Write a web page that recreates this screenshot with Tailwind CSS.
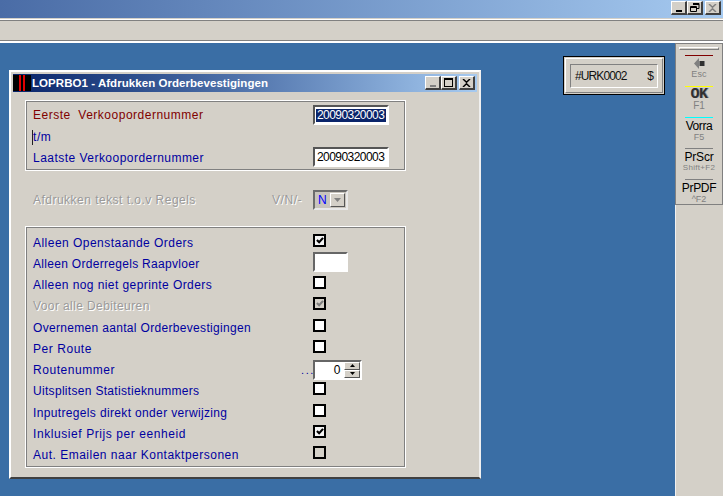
<!DOCTYPE html>
<html>
<head>
<meta charset="utf-8">
<script src="https://cdn.jsdelivr.net/npm/@tailwindcss/browser@4"></script>
</head>
<body class="m-0 overflow-hidden">
<div class="w-[723px] h-[496px] flex flex-col overflow-hidden bg-[#3a6ea5] font-['Liberation_Sans',Arial,sans-serif] text-[12px] leading-[14px] tracking-[0.55px]">
  <!-- app title bar -->
  <div class="h-[18px] shrink-0 flex justify-end items-start pt-[1px] pr-[2px] bg-gradient-to-r from-[#4a6ca6] to-[#a6caf0]">
    <div class="flex">
      <div class="w-[16px] h-[14px] bg-[#d4d0c8] border-t border-l border-white border-r-2 border-b-2 border-r-[#404040] border-b-[#404040] flex items-end justify-center pb-[1px]"><div class="w-[6px] h-[2px] bg-black"></div></div>
      <div class="w-[16px] h-[14px] bg-[#d4d0c8] border-t border-l border-white border-r-2 border-b-2 border-r-[#404040] border-b-[#404040] flex items-center justify-center">
        <svg width="10" height="9" viewBox="0 0 10 9"><path d="M3 0.5h6v5H7M3 1.5h6M0.5 3.5h6v5h-6zM0.5 4.5h6" fill="none" stroke="#000"/></svg>
      </div>
      <div class="ml-[2px] w-[16px] h-[14px] bg-[#d4d0c8] border-t border-l border-white border-r-2 border-b-2 border-r-[#404040] border-b-[#404040] flex items-center justify-center">
        <svg width="9" height="8" viewBox="0 0 9 8"><path d="M1 0l3.500 3.200L8 0M1 8l3.500-3.200L8 8" fill="none" stroke="#808080" stroke-width="1.5"/></svg>
      </div>
    </div>
  </div>
  <!-- menu band -->
  <div class="h-[25px] shrink-0 bg-[#d4d0c8] border-b-2 border-b-white relative">
    <div class="h-[1px] mt-[1px] bg-white"></div>
    <div class="h-[1px] bg-[#808080]"></div>
    <div class="absolute left-0 right-0 bottom-0 h-[1px] bg-[#808080]"></div>
  </div>
  <!-- desktop -->
  <div class="relative flex-1 flex justify-end">
    <!-- toolbar column -->
    <div class="w-[48px] h-full bg-[#d4d0c8] border-l border-[#f0f0f0]">
      <div class="-ml-[1px] h-[162px] border border-[#808080] bg-[#d4d0c8] flex flex-col items-center pt-[3px] tracking-normal">
        <div class="w-[40px] h-[3px] bg-[#d4d0c8] border-t border-l border-white border-r border-b border-r-[#808080] border-b-[#808080] mb-[5px]"></div>
        <div class="h-[31px] w-full flex flex-col items-center">
          <div class="w-[28px] h-[1px] bg-[#800000]"></div>
          <svg class="mt-[2px]" width="11" height="11" viewBox="0 0 11 11"><path d="M0 5.500L5 0v3h6v5H5v3z" fill="#808080"/><path d="M6 3h4v5H6z" fill="#303030"/></svg>
          <div class="text-[9px] leading-[8px] mt-[1px] text-[#808080] tracking-[0.2px]">Esc</div>
        </div>
        <div class="h-[31px] w-full flex flex-col items-center">
          <div class="w-[28px] h-[1px] bg-[#ffff00]"></div>
          <div class="font-['Liberation_Mono',monospace] text-[15px] leading-[13px] mt-[1px] font-bold text-[#303030] tracking-[-0.5px] [text-shadow:1px_0_#999]">OK</div>
          <div class="text-[10px] leading-[8px] mt-[1px] text-[#808080]">F1</div>
        </div>
        <div class="h-[31px] w-full flex flex-col items-center">
          <div class="w-[28px] h-[1px] bg-[#00ffff]"></div>
          <div class="text-[12px] leading-[14px] mt-[1px] text-black tracking-[-0.4px]">Vorra</div>
          <div class="text-[9px] leading-[8px] text-[#808080]">F5</div>
        </div>
        <div class="h-[31px] w-full flex flex-col items-center">
          <div class="w-[28px] h-[1px] bg-[#808080]"></div>
          <div class="text-[12px] leading-[14px] mt-[1px] text-black tracking-[-0.2px]">PrScr</div>
          <div class="text-[8px] leading-[8px] text-[#808080] tracking-[0.3px] whitespace-nowrap">Shift+F2</div>
        </div>
        <div class="h-[24px] w-full flex flex-col items-center">
          <div class="w-[28px] h-[1px] bg-[#808080]"></div>
          <div class="text-[12px] leading-[14px] mt-[1px] text-black tracking-[-0.3px]">PrPDF</div>
          <div class="text-[9px] leading-[8px] text-[#808080]">^F2</div>
        </div>
      </div>
    </div>

    <!-- floating label window -->
    <div class="absolute left-[563px] top-[13px] w-[102px] h-[39px] bg-[#d4d0c8] border border-black p-[1px]">
      <div class="w-full h-full border border-white border-r-[#808080] border-b-[#808080] px-[4px] pt-[5px] pb-[4px]">
        <div class="w-full h-full border border-[#808080] border-r-white border-b-white flex items-center justify-between pl-[4px] pr-[4px] text-[#101010] tracking-[-0.9px] text-[12px]">
          <span>#URK0002</span><span>$</span>
        </div>
      </div>
    </div>

    <!-- main window -->
    <div class="absolute left-[9px] top-[27px] w-[472px] h-[409px] bg-[#d4d0c8] border-2 border-t-white border-l-white border-r-[#f0f0f0] border-b-[#404040] p-[2px] flex flex-col">
      <div class="h-[18px] shrink-0 flex items-center bg-gradient-to-r from-[#0a246a] to-[#a6caf0]">
        <div class="w-[18px] h-[16px] bg-black flex justify-center gap-[2px] shrink-0">
          <div class="w-[2px] h-full bg-[#e00000]"></div><div class="w-[2px] h-full bg-[#e00000]"></div>
        </div>
        <div class="ml-[1px] text-white font-bold text-[11.5px] tracking-[0.05px] whitespace-nowrap">LOPRBO1 - Afdrukken Orderbevestigingen</div>
        <div class="ml-auto mr-[2px] flex">
          <div class="w-[16px] h-[14px] bg-[#d4d0c8] border-t border-l border-white border-r-2 border-b-2 border-r-[#404040] border-b-[#404040] flex items-end justify-center pb-[1px]"><div class="w-[6px] h-[2px] bg-[#808080]"></div></div>
          <div class="w-[16px] h-[14px] bg-[#d4d0c8] border-t border-l border-white border-r-2 border-b-2 border-r-[#404040] border-b-[#404040] flex items-center justify-center"><div class="w-[9px] h-[9px] border border-black border-t-2"></div></div>
          <div class="ml-[2px] w-[16px] h-[14px] bg-[#d4d0c8] border-t border-l border-white border-r-2 border-b-2 border-r-[#404040] border-b-[#404040] flex items-center justify-center">
            <svg width="9" height="8" viewBox="0 0 9 8"><path d="M1 0l3.500 3.200L8 0M1 8l3.500-3.200L8 8" fill="none" stroke="#000" stroke-width="1.5"/></svg>
          </div>
        </div>
      </div>

      <!-- group 1 -->
      <div class="ml-[13px] mt-[9px] w-[379px] h-[69px] border border-[#808080] outline-1 outline-white pl-[6px] pr-[15px] pt-[3px] flex flex-col">
        <div class="h-[20px] flex items-center justify-between text-[#800000] tracking-[0.5px]"><span class="whitespace-pre">Eerste  Verkoopordernummer</span>
          <div class="w-[76px] h-[20px] bg-white border-2 border-[#555] border-r-white border-b-white flex items-center pl-[1px] pr-[1px] text-white tracking-[-0.55px]"><span class="bg-[#0a246a] w-full px-[1px] leading-[13px]">20090320003</span></div>
        </div>
        <div class="h-[20px] flex items-center text-[#0000a0] mt-[1px]"><span class="border-l border-[#202020] -ml-[1px] mt-[2px] leading-[15px]">t/m</span></div>
        <div class="h-[20px] mt-[1px] flex items-center justify-between text-[#0000a0] tracking-[0.47px]"><span class="mt-[2px]">Laatste Verkoopordernummer</span>
          <div class="w-[76px] h-[20px] bg-white border-2 border-[#555] border-r-white border-b-white flex items-center pl-[2px] text-black tracking-[-0.55px]">20090320003</div>
        </div>
      </div>

      <!-- combo row -->
      <div class="ml-[20px] mt-[20px] h-[20px] flex items-center text-[#9a9a9a] [text-shadow:1px_1px_#fff]">
        <span class="w-[239px] tracking-[0.48px]">Afdrukken tekst t.o.v Regels</span>
        <span class="w-[41px]">V/N/-</span>
        <div class="w-[35px] h-[20px] bg-[#c8c4bc] border-2 border-[#6c6c6c] border-r-[#e8e8e8] border-b-[#e8e8e8] flex items-center justify-between pl-[3px] pr-[1px] text-[#0000ff] [text-shadow:none]">
          <span>N</span>
          <div class="w-[15px] h-[14px] bg-[#d4d0c8] border border-white border-r-[#555] border-b-[#555] flex items-center justify-center">
            <svg width="7" height="4" viewBox="0 0 7 4"><path d="M0 0h7L3.500 4z" fill="#808080"/></svg>
          </div>
        </div>
      </div>

      <!-- group 2 -->
      <div class="ml-[13px] mt-[17px] w-[379px] h-[240px] border border-[#808080] outline-1 outline-white pl-[6px] pt-[4px] flex flex-col text-[#0000a0]">
        <div class="h-[21.25px] flex items-center"><span class="w-[280px] tracking-[0.47px]">Alleen Openstaande Orders</span>
          <div class="w-[13px] h-[13px] border-[2px] border-black bg-[#f4f4f4] -mt-[5px] flex items-center justify-center"><svg width="8" height="7" viewBox="0 0 9 8"><path d="M1 3.500l2.500 2.500L8 1" fill="none" stroke="#000" stroke-width="2.500"/></svg></div>
        </div>
        <div class="h-[21.25px] flex items-center"><span class="w-[280px] tracking-[0.3px]">Alleen Orderregels Raapvloer</span>
          <div class="w-[35px] h-[20px] bg-white border-2 border-[#666] border-r-white border-b-white -mt-[3px]"></div>
        </div>
        <div class="h-[21.25px] flex items-center"><span class="w-[280px] tracking-[0.42px]">Alleen nog niet geprinte Orders</span>
          <div class="w-[13px] h-[13px] border-[2px] border-black bg-white -mt-[5px]"></div>
        </div>
        <div class="h-[21.25px] flex items-center text-[#9a9a9a] [text-shadow:1px_1px_#fff]"><span class="w-[280px] tracking-[0.4px]">Voor alle Debiteuren</span>
          <div class="w-[13px] h-[13px] border-[2px] border-black bg-[#d4d0c8] -mt-[5px] flex items-center justify-center"><svg width="8" height="7" viewBox="0 0 9 8"><path d="M1 3.500l2.500 2.500L8 1" fill="none" stroke="#808080" stroke-width="2.500"/></svg></div>
        </div>
        <div class="h-[21.25px] flex items-center"><span class="w-[280px] tracking-[0.32px]">Overnemen aantal Orderbevestigingen</span>
          <div class="w-[13px] h-[13px] border-[2px] border-black bg-white -mt-[5px]"></div>
        </div>
        <div class="h-[21.25px] flex items-center"><span class="w-[280px]">Per Route</span>
          <div class="w-[13px] h-[13px] border-[2px] border-black bg-white -mt-[5px]"></div>
        </div>
        <div class="h-[21.25px] flex items-center"><span class="w-[268px]">Routenummer</span><span class="w-[12px] text-[11px] tracking-[1.6px]">...</span>
          <div class="w-[49px] h-[20px] -mt-[1px] bg-white border-2 border-[#666] border-r-white border-b-white flex items-center justify-end text-black">
            <span class="mr-[3px]">0</span>
            <div class="w-[16px] h-full flex flex-col">
              <div class="h-1/2 bg-[#d4d0c8] border border-white border-r-[#555] border-b-[#555] flex items-center justify-center"><svg width="5" height="3" viewBox="0 0 5 3"><path d="M2.500 0L5 3H0z"/></svg></div>
              <div class="h-1/2 bg-[#d4d0c8] border border-white border-r-[#555] border-b-[#555] flex items-center justify-center"><svg width="5" height="3" viewBox="0 0 5 3"><path d="M0 0h5L2.500 3z"/></svg></div>
            </div>
          </div>
        </div>
        <div class="h-[21.25px] flex items-center"><span class="w-[280px] tracking-[0.31px]">Uitsplitsen Statistieknummers</span>
          <div class="w-[13px] h-[13px] border-[2px] border-black bg-white -mt-[5px]"></div>
        </div>
        <div class="h-[21.25px] flex items-center"><span class="w-[280px] tracking-[0.35px]">Inputregels direkt onder verwijzing</span>
          <div class="w-[13px] h-[13px] border-[2px] border-black bg-white -mt-[5px]"></div>
        </div>
        <div class="h-[21.25px] flex items-center"><span class="w-[280px] tracking-[0.58px]">Inklusief Prijs per eenheid</span>
          <div class="w-[13px] h-[13px] border-[2px] border-black bg-[#f4f4f4] -mt-[5px] flex items-center justify-center"><svg width="8" height="7" viewBox="0 0 9 8"><path d="M1 3.500l2.500 2.500L8 1" fill="none" stroke="#000" stroke-width="2.500"/></svg></div>
        </div>
        <div class="h-[21.25px] flex items-center"><span class="w-[280px] tracking-[0.5px]">Aut. Emailen naar Kontaktpersonen</span>
          <div class="w-[13px] h-[13px] border-[2px] border-black bg-[#d4d0c8] -mt-[5px]"></div>
        </div>
      </div>
    </div>
  </div>
</div>
</body>
</html>
